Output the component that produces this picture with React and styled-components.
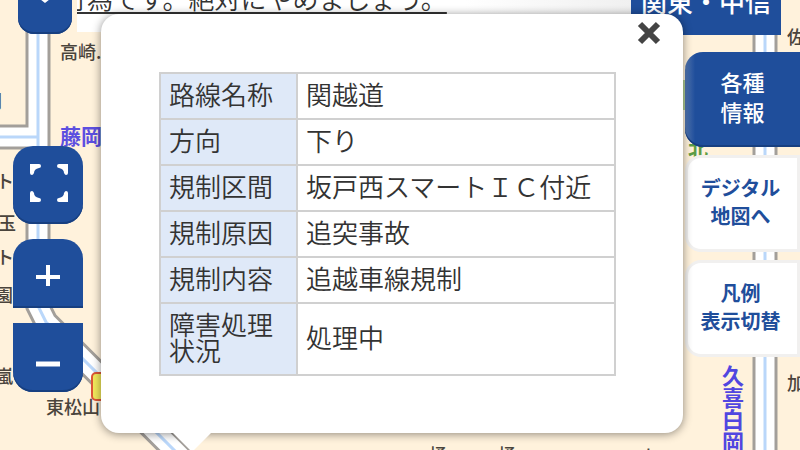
import styled, { createGlobalStyle } from 'styled-components'

const GlobalStyle = createGlobalStyle`
    :root {
        --blue: #1f4e9b;
        --dark-blue: #173f80;
        --beige: #fff2dc;
        --line: #d0d0d0;
    }

    * {
        box-sizing: border-box;
    }

    body {
        margin: 0;
        font-family: "Noto Sans CJK JP", "Noto Sans", sans-serif;
    }

    button {
        font-family: inherit;
        border: 0;
        padding: 0;
        cursor: pointer;
    }
`

const Page = styled.div`
    position: relative;
    display: grid;
    grid-template-columns: 101px 1fr 117px;
    align-items: start;
    height: 100vh;
    overflow: hidden;
`

const Map = styled.div`
    position: absolute;
    inset: 0;
    overflow: hidden;
    background: var(--beige);

    svg {
        display: block;
        width: 100%;
        height: 100%;
    }
`

const Place = styled.span`
    position: absolute;
    left: ${({ $x }) => $x}px;
    top: ${({ $y }) => $y}px;
    font-size: ${({ $size }) => $size || 18}px;
    line-height: 24px;
    font-weight: ${({ $color }) => ($color ? 700 : 500)};
    white-space: nowrap;
    color: ${({ $color }) => $color || '#4a443c'};
    writing-mode: ${({ $vertical }) => ($vertical ? 'vertical-rl' : 'horizontal-tb')};
`

const Header = styled.header`
    grid-column: 1 / -1;
    grid-row: 1;
    position: relative;
    display: flex;
    height: 64px;
    margin-top: -29px;
    padding: 0 19px 0 77px;
`

const Notice = styled.a`
    flex: 1;
    height: 61px;
    overflow: hidden;
    background: linear-gradient(90deg, #fff 70%, #f0f0f0);
    color: #333;
    font-size: 26px;
    font-weight: 350;
    line-height: 54px;
    text-indent: -16px;
    white-space: nowrap;
    text-decoration: underline;
    text-decoration-thickness: 2px;
    text-underline-offset: 3px;
`

const RegionButton = styled.button`
    width: 150px;
    padding-bottom: 6px;
    background: var(--blue);
    color: #fff;
    font-size: 26px;
    font-weight: 500;
    white-space: nowrap;
`

const Tools = styled.nav`
    grid-column: 1;
    grid-row: 1;
    position: relative;
    display: flex;
    flex-direction: column;
    gap: 15px;
    padding-left: 13px;
`

const ToolButton = styled.button`
    display: grid;
    place-items: center;
    width: 70px;
    height: ${({ $height }) => $height || 69}px;
    border-radius: ${({ $radius }) => $radius || '20px'};
    background: var(--blue);
    box-shadow: inset 0 -2px 0 var(--dark-blue);
`

const MenuButton = styled(ToolButton)`
    width: 54px;
    margin: 0 0 97px 5px;
    place-items: start center;
`

const Popup = styled.section`
    grid-column: 2;
    grid-row: 1;
    position: relative;
    margin-top: 14px;
    padding: 58px 67px 57px 58px;
    border-radius: 18px;
    background: #fff;
    box-shadow: 0 1px 10px rgba(0, 0, 0, 0.45);

    &::after {
        content: '';
        position: absolute;
        left: 72px;
        top: 100%;
        border: 19px solid transparent;
        border-top-color: #fff;
        border-bottom: 0;
    }
`

const CloseButton = styled.button`
    position: absolute;
    top: 7px;
    right: 22px;
    width: 24px;
    height: 24px;
    background: none;

    svg {
        display: block;
    }
`

const InfoTable = styled.table`
    width: 100%;
    border-collapse: collapse;
    color: #333;
    font-size: 26px;
    line-height: 26px;

    th,
    td {
        height: 46px;
        padding: 0 8px 4px;
        border: 2px solid var(--line);
        text-align: left;
        font-weight: 350;
    }

    th {
        width: 137px;
        background: #dfe9f8;
    }

    tr:last-child th {
        height: 72px;
    }
`

const Tabs = styled.nav`
    grid-column: 3;
    grid-row: 1;
    position: relative;
    display: flex;
    flex-direction: column;
    gap: 8px;
    padding: 52px 0 0 2px;
`

const Tab = styled.button`
    height: 97px;
    padding: 0 4px 3px 0;
    border-radius: 16px 0 0 16px;
    border: 3px solid #f1f0ef;
    background: #fff;
    color: var(--blue);
    font-size: 20px;
    font-weight: 600;
    line-height: 28px;
    white-space: pre-line;
`

const ActiveTab = styled(Tab)`
    height: 95px;
    padding: 0 0 8px;
    border: 0;
    border-radius: 18px 0 0 18px;
    background: linear-gradient(90deg, #5377b2, var(--blue) 10px);
    box-shadow: inset 0 -2px 0 var(--dark-blue);
    color: #fff;
    font-size: 22px;
    font-weight: 500;
    line-height: 30px;
`

const roads = [
    'M-10 137 H38',
    'M38 -10 V306 L46 322 L184 460',
    'M765 -10 V460',
]

const places = [
    { name: '間', x: -16, y: 88 },
    { name: '高崎.', x: 60, y: 39 },
    { name: '藤岡', x: 60, y: 123, size: 21, color: '#5c4fe0' },
    { name: 'ト', x: -4, y: 168 },
    { name: '玉', x: -2, y: 210 },
    { name: 'ト', x: -4, y: 244 },
    { name: '園', x: -5, y: 282 },
    { name: '嵐', x: -5, y: 363 },
    { name: '東松山', x: 46, y: 394 },
    { name: '佐', x: 787, y: 24 },
    { name: '北', x: 688, y: 137, size: 20, color: '#5c9c46' },
    { name: '加', x: 787, y: 370 },
    { name: '久喜白岡', x: 721, y: 365, size: 22, color: '#5146e0', vertical: true },
    { name: '桶', x: 429, y: 442 },
    { name: '桶', x: 498, y: 442 },
    { name: '上', x: 640, y: 444 },
]

const rows = [
    ['路線名称', '関越道'],
    ['方向', '下り'],
    ['規制区間', '坂戸西スマートＩＣ付近'],
    ['規制原因', '追突事故'],
    ['規制内容', '追越車線規制'],
    ['障害処理状況', '処理中'],
]

const RoadMap = () => {
    return (
        <Map>
            <svg viewBox="0 0 800 450" preserveAspectRatio="xMidYMid slice" fill="none">
                {roads.map((d) => <path key={d} d={d} stroke="#a39f9a" strokeWidth="25" />)}
                {roads.map((d) => <path key={d} d={d} stroke="#fff" strokeWidth="19" />)}
                {roads.map((d) => <path key={d} d={d} stroke="#bad7fa" strokeWidth="3" />)}
                <rect x="92" y="373" width="30" height="27" rx="4" fill="#f3ea5c" stroke="#dc5638" strokeWidth="2" />
                <path d="M685 80 V110" stroke="#b2cf96" strokeWidth="4" />
            </svg>
            {places.map(({ name, x, y, size, color, vertical }) => (
                <Place key={`${x}-${y}`} $x={x} $y={y} $size={size} $color={color} $vertical={vertical}>
                    {name}
                </Place>
            ))}
        </Map>
    )
}

const App = () => {
    return (
        <Page>
            <GlobalStyle />
            <RoadMap />

            <Header>
                <Notice href="#notice">行為です。絶対にやめましょう。</Notice>
                <RegionButton>関東・中信</RegionButton>
            </Header>

            <Tools>
                <MenuButton $height={34} $radius="0 0 16px 16px" aria-label="メニュー">
                    <svg width="12" height="4" viewBox="0 0 12 4">
                        <path d="M2 -2 L6 1 L10 -2" fill="none" stroke="#fff" strokeWidth="3" />
                    </svg>
                </MenuButton>
                <ToolButton $height={78} aria-label="全画面">
                    <svg width="40" height="42" viewBox="-2 0 40 42" fill="#fff">
                        <path d="M0 0 H9 Q11 0 11 2 Q11 4 9 4 Q4 5 4 9 Q3 11 2 11 Q0 11 0 9 Z" />
                        <path d="M38 0 H29 Q27 0 27 2 Q27 4 29 4 Q34 5 34 9 Q35 11 36 11 Q38 11 38 9 Z" />
                        <path d="M0 38 H9 Q11 38 11 36 Q11 34 9 34 Q4 33 4 29 Q3 27 2 27 Q0 27 0 29 Z" />
                        <path d="M38 38 H29 Q27 38 27 36 Q27 34 29 34 Q34 33 34 29 Q35 27 36 27 Q38 27 38 29 Z" />
                    </svg>
                </ToolButton>
                <ToolButton $radius="20px 20px 0 0" aria-label="拡大">
                    <svg width="24" height="24" viewBox="0 0 24 24">
                        <path d="M0 15 H24 M12 3 V24" stroke="#fff" strokeWidth="4" />
                    </svg>
                </ToolButton>
                <ToolButton $radius="0 0 20px 20px" aria-label="縮小">
                    <svg width="24" height="24" viewBox="0 0 24 24">
                        <path d="M0 18 H24" stroke="#fff" strokeWidth="5" />
                    </svg>
                </ToolButton>
            </Tools>

            <Tabs>
                <ActiveTab>{'各種\n情報'}</ActiveTab>
                <Tab>{'デジタル\n地図へ'}</Tab>
                <Tab>{'凡例\n表示切替'}</Tab>
            </Tabs>

            <Popup>
                <CloseButton aria-label="閉じる">
                    <svg width="24" height="24" viewBox="0 0 24 24">
                        <path d="M3 3 L21 21 M21 3 L3 21" stroke="#444" strokeWidth="6" />
                    </svg>
                </CloseButton>
                <InfoTable>
                    <tbody>
                        {rows.map(([label, value]) => (
                            <tr key={label}>
                                <th scope="row">{label}</th>
                                <td>{value}</td>
                            </tr>
                        ))}
                    </tbody>
                </InfoTable>
            </Popup>
        </Page>
    )
}

export default App
